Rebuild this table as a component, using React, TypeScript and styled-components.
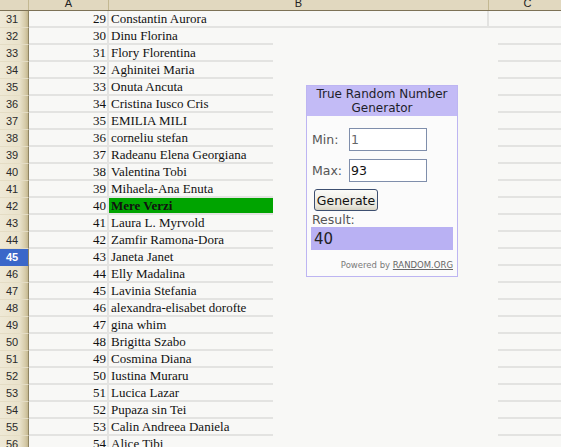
import React from "react";
import styled, { createGlobalStyle } from "styled-components";

const GlobalStyle = createGlobalStyle`
  html, body { margin: 0; padding: 0; background: #f8f8f6; overflow: hidden; }
  * { box-sizing: border-box; }
`;

const COLS = { head: 29, a: 80, b: 380, c: 78 };

const Sheet = styled.div`
  position: relative;
  width: 561px;
  height: 447px;
  overflow: hidden;
  background: #f8f8f6;
`;

const HeaderBar = styled.div`
  display: flex;
  height: 11px;
  background: #e1d8bf;
  border-bottom: 1px solid #7d7256;
`;

const ColHeader = styled.div<{ $w: number }>`
  flex: 0 0 ${(p) => p.$w}px;
  height: 10px;
  overflow: hidden;
  display: flex;
  align-items: flex-end;
  justify-content: center;
  border-right: 1px solid #c3b892;
  font-family: "Liberation Sans", Arial, sans-serif;
  font-size: 11px;
  line-height: 11px;
  color: #222;
  padding-bottom: 1px;
`;

const Row = styled.div`
  display: flex;
  height: 17px;
`;

const RowHead = styled.div<{ $sel?: boolean }>`
  flex: 0 0 ${COLS.head}px;
  height: 17px;
  display: flex;
  align-items: center;
  padding-left: 6px;
  font-family: "Liberation Sans", Arial, sans-serif;
  font-size: 11px;
  color: ${(p) => (p.$sel ? "#ffffff" : "#2a2a2a")};
  font-weight: ${(p) => (p.$sel ? "bold" : "normal")};
  background: ${(p) =>
    p.$sel
      ? "#3a67c9"
      : "linear-gradient(to right, #efe9d6 0%, #e9e2cb 70%, #d6cba9 90%, #c4b78f 100%)"};
  border-bottom: 1px solid ${(p) => (p.$sel ? "#3a67c9" : "#e4dcc4")};
  border-right: 1px solid #8f8462;
`;

const Cell = styled.div<{ $w: number; $align?: "left" | "right"; $hi?: boolean }>`
  flex: 0 0 ${(p) => p.$w}px;
  height: 17px;
  display: flex;
  align-items: center;
  justify-content: ${(p) => (p.$align === "right" ? "flex-end" : "flex-start")};
  padding: 0 1px 0 2px;
  font-family: "Liberation Serif", "Times New Roman", serif;
  font-size: 13px;
  font-weight: ${(p) => (p.$hi ? "bold" : "normal")};
  color: #111;
  white-space: nowrap;
  background: ${(p) => (p.$hi ? "#00a400" : "transparent")};
  border-bottom: 2px solid #e3e3e1;
  border-right: 2px solid #e3e3e1;
`;

const Overlay = styled.div`
  position: absolute;
  left: 273px;
  top: 28px;
  width: 225px;
  bottom: 0;
  background: #f8f8f6;
  padding: 57px 0 0 33px;
`;

const Widget = styled.div`
  width: 152px;
  height: 192px;
  background: #fbfbfb;
  border: 1px solid #bdb5f2;
  font-family: "DejaVu Sans", Verdana, sans-serif;
  display: flex;
  flex-direction: column;
`;

const Title = styled.div`
  background: #c3bbf6;
  height: 30px;
  text-align: center;
  font-size: 12px;
  line-height: 14px;
  color: #1e1e2a;
  padding-top: 1px;
`;

const Body = styled.div`
  display: flex;
  flex-direction: column;
  padding: 12px 4px 0 4px;
`;

const FieldRow = styled.div`
  display: flex;
  align-items: center;
  height: 23px;
  margin-bottom: 8px;
`;

const Label = styled.span`
  width: 38px;
  font-size: 12.5px;
  color: #555;
  padding-left: 1px;
`;

const Input = styled.div<{ $dim?: boolean }>`
  width: 78px;
  height: 23px;
  border: 1px solid #7f8eab;
  background: #fff;
  font-size: 12.5px;
  color: ${(p) => (p.$dim ? "#666" : "#111")};
  display: flex;
  align-items: center;
  padding-left: 1px;
`;

const Button = styled.div`
  margin-left: 3px;
  width: 64px;
  height: 22px;
  border: 1px solid #3d4f70;
  border-radius: 3px;
  background: linear-gradient(#fbfbf8, #e8e6dc 80%, #d8d4c4);
  font-size: 12.5px;
  color: #111;
  display: flex;
  align-items: center;
  justify-content: center;
  margin-top: -1px;
`;

const ResultLabel = styled.div`
  font-size: 12.5px;
  color: #555;
  margin-top: 2px;
  line-height: 14px;
  padding-left: 1px;
`;

const ResultBox = styled.div`
  height: 23px;
  width: 142px;
  background: #b9b1f3;
  font-size: 15px;
  color: #222;
  display: flex;
  align-items: center;
  padding-left: 3px;
`;

const Powered = styled.div`
  margin-top: 10px;
  width: 142px;
  text-align: right;
  font-size: 8.5px;
  color: #7a7a7a;
  white-space: nowrap;
`;

const Link = styled.span`
  text-decoration: underline;
  color: #666;
`;

const names: string[] = [
  "Constantin Aurora",
  "Dinu Florina",
  "Flory Florentina",
  "Aghinitei Maria",
  "Onuta Ancuta",
  "Cristina Iusco Cris",
  "EMILIA MILI",
  "corneliu stefan",
  "Radeanu Elena Georgiana",
  "Valentina Tobi",
  "Mihaela-Ana Enuta",
  "Mere Verzi",
  "Laura L. Myrvold",
  "Zamfir Ramona-Dora",
  "Janeta Janet",
  "Elly Madalina",
  "Lavinia Stefania",
  "alexandra-elisabet dorofte",
  "gina whim",
  "Brigitta Szabo",
  "Cosmina Diana",
  "Iustina Muraru",
  "Lucica Lazar",
  "Pupaza sin Tei",
  "Calin Andreea Daniela",
  "Alice Tibi",
];

export default function App() {
  return (
    <Sheet>
      <GlobalStyle />
      <HeaderBar>
        <ColHeader $w={COLS.head} />
        <ColHeader $w={COLS.a}>A</ColHeader>
        <ColHeader $w={COLS.b}>B</ColHeader>
        <ColHeader $w={COLS.c}>C</ColHeader>
      </HeaderBar>
      {names.map((name, i) => {
        const rowNum = 31 + i;
        const num = 29 + i;
        return (
          <Row key={rowNum}>
            <RowHead $sel={rowNum === 45}>{rowNum}</RowHead>
            <Cell $w={COLS.a} $align="right">{num}</Cell>
            <Cell $w={COLS.b} $hi={name === "Mere Verzi"}>
              {name}
            </Cell>
            <Cell $w={COLS.c} />
          </Row>
        );
      })}
      <Overlay>
        <Widget>
          <Title>
            True Random Number
            <br />
            Generator
          </Title>
          <Body>
            <FieldRow>
              <Label>Min:</Label>
              <Input $dim>1</Input>
            </FieldRow>
            <FieldRow>
              <Label>Max:</Label>
              <Input>93</Input>
            </FieldRow>
            <Button>Generate</Button>
            <ResultLabel>Result:</ResultLabel>
            <ResultBox>40</ResultBox>
            <Powered>
              Powered by <Link>RANDOM.ORG</Link>
            </Powered>
          </Body>
        </Widget>
      </Overlay>
    </Sheet>
  );
}
